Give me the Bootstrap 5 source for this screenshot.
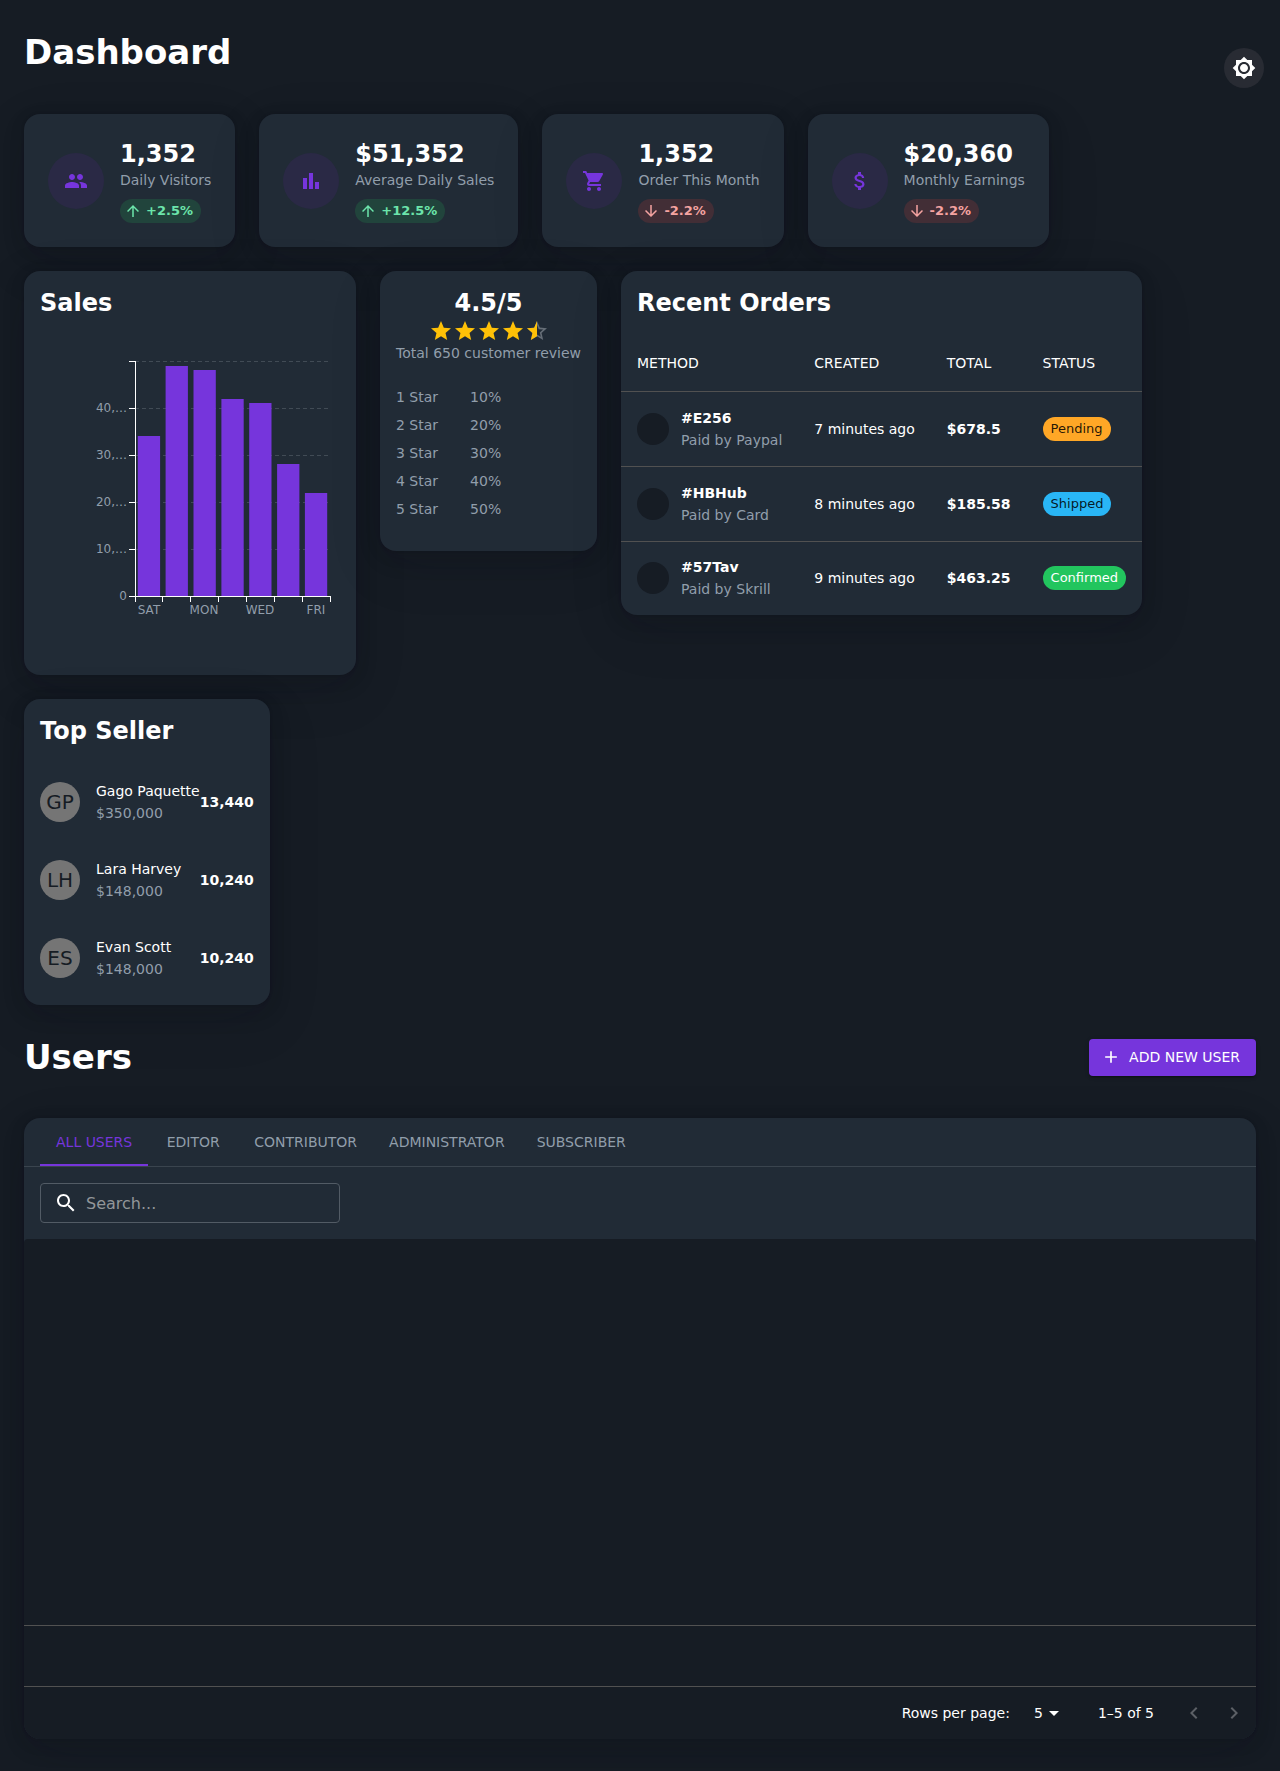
<!DOCTYPE html>
<html lang="en">
<head>
<meta charset="utf-8">
<meta name="viewport" content="width=device-width, initial-scale=1">
<title>Dashboard</title>
<link href="https://cdn.jsdelivr.net/npm/bootstrap@5.3.0/dist/css/bootstrap.min.css" rel="stylesheet">
<style>
  :root {
    --page: #161c24;
    --panel: #212b36;
    --brand: #7635dc;
    --muted: #919eab;
    --rule: #515151;
  }
  body {
    background: var(--page);
    color: #fff;
    font-family: "DejaVu Sans", sans-serif;
    font-size: 14px;
    line-height: 20px;
  }
  svg { display: block; flex-shrink: 0; }
  .ico { width: 24px; height: 24px; fill: currentColor; }
  .ico-sm { width: 18px; height: 18px; fill: currentColor; }
  .ico-md { width: 20px; height: 20px; fill: currentColor; }
  .page-title { font-size: 34px; line-height: 42px; font-weight: 700; margin: 0; }
  .panel-title { font-size: 24px; line-height: 32px; font-weight: 700; margin: 0; }
  .soft { color: var(--muted); }
  .top-bar { padding: 7px 0 26px; }
  .theme-btn {
    width: 40px; height: 40px; margin: 17px -8px 0 0;
    background: #282b33; color: #fff; border: 0; border-radius: 50%;
  }
  .panel {
    background: var(--panel);
    border-radius: 16px;
    box-shadow: 0 4px 16px rgba(17,17,26,.1), 0 8px 24px rgba(17,17,26,.1), 0 16px 56px rgba(17,17,26,.1), 0 0 3px rgba(17,17,26,.3);
  }
  .disc {
    width: 56px; height: 56px; border-radius: 50%;
    background: #2a2945; color: var(--brand);
  }
  .trend {
    height: 24px; border-radius: 12px; padding: 0 8px 0 4px; margin-top: 9px;
    font-size: 13px; font-weight: 700; gap: 4px;
  }
  .trend-up { background: #21443c; color: #6ce5ab; }
  .trend-down { background: #422e36; color: #f5a3a1; }
  .chart-text { font-size: 12px; fill: var(--muted); }
  .stars { color: #ffc107; }
  .score-list { padding: 20px 16px 28px; margin: 0; }
  .score-list li { gap: 32px; line-height: 28px; }

  .orders { border-collapse: collapse; margin-top: 16px; }
  .orders th, .orders td { padding: 16px; border-bottom: 1px solid var(--rule); }
  .orders th { font-weight: 400; line-height: 24px; text-transform: uppercase; }
  .orders tbody tr { height: 75px; }
  .orders tbody tr:last-child { height: 73px; }
  .orders td { padding-top: 15px; padding-bottom: 15px; }
  .orders tr:last-child td { border-bottom: 0; padding-top: 14px; padding-bottom: 14px; }
  .pay-dot { width: 32px; height: 32px; border-radius: 50%; background: var(--page); }
  .two-line { line-height: 22px; }
  .chip { display: inline-block; border-radius: 12px; padding: 0 8px; font-size: 13px; line-height: 24px; vertical-align: middle; }
  .chip-wait { background: #ffa726; color: rgba(0,0,0,.87); }
  .chip-sent { background: #29b6f6; color: rgba(0,0,0,.87); }
  .chip-done { background: #22c55e; color: #fff; }

  .seller-list { padding: 16px 16px 8px; }
  .seller-list li { height: 78px; }
  .initials {
    width: 40px; height: 40px; border-radius: 50%; margin-right: 16px;
    background: #757575; color: var(--page); font-size: 20px;
  }

  .users-bar { padding: 31px 0 40px; }
  .add-btn {
    --bs-btn-color: #fff; --bs-btn-hover-color: #fff;
    --bs-btn-bg: var(--brand); --bs-btn-hover-bg: #5f27b8; --bs-btn-border-width: 0;
    --bs-btn-padding-x: 16px; --bs-btn-padding-y: 6px;
    --bs-btn-font-size: 14px; --bs-btn-border-radius: 4px; --bs-btn-line-height: 25px;
    padding-left: 12px; gap: 8px; text-transform: uppercase;
    box-shadow: 0 3px 1px -2px rgba(0,0,0,.2), 0 2px 2px rgba(0,0,0,.14), 0 1px 5px rgba(0,0,0,.12);
  }
  .role-tabs { padding: 0 16px; border-bottom: 1px solid #3a444e; }
  .role-tabs button {
    min-width: 90px; height: 48px; padding: 0 16px; border: 0; background: none;
    color: var(--muted); text-transform: uppercase; border-bottom: 2px solid transparent; border-top: 2px solid transparent;
  }
  .role-tabs button.on { color: var(--brand); border-bottom-color: var(--brand); }
  .finder {
    width: 300px; height: 40px; padding: 0 13px; gap: 8px;
    border: 1px solid #525b65; border-radius: 4px;
  }
  .finder input { background: none; border: 0; outline: 0; color: #fff; font-size: 16px; padding: 1px 0 0; width: 100%; }
  .finder input::placeholder { color: #929699; opacity: 1; }
  .user-table { background: var(--page); border-radius: 4px 4px 16px 16px; }
  .user-rows { height: 386px; }
  .user-fill { height: 62px; border-top: 1px solid var(--rule); border-bottom: 1px solid var(--rule); }
  .pager { height: 52px; padding-right: 2px; }
  .pager select {
    appearance: none; background: none; border: 0; color: #fff; outline: 0;
    padding: 0 14px 0 8px; margin-left: 16px;
  }
  .pager select option { color: #000; }
  .caret-mark { margin-left: -24px; pointer-events: none; }
  .pager-range { margin-left: 32px; }
  .pager button { width: 40px; height: 40px; border: 0; background: none; color: #5c6066; }
</style>
<script src="https://cdn.jsdelivr.net/npm/bootstrap@5.3.0/dist/js/bootstrap.bundle.min.js"></script>
</head>
<body>
<main class="container-fluid px-4 pt-4 pb-0">
  <header class="top-bar d-flex justify-content-between align-items-start">
    <h1 class="page-title">Dashboard</h1>
    <button type="button" class="theme-btn d-flex align-items-center justify-content-center p-0" aria-label="Toggle light mode">
      <svg class="ico" viewBox="0 0 24 24"><path d="M20 8.69V4h-4.69L12 .69 8.69 4H4v4.69L.69 12 4 15.31V20h4.69L12 23.31 15.31 20H20v-4.69L23.31 12 20 8.69zM12 18c-3.31 0-6-2.69-6-6s2.69-6 6-6 6 2.69 6 6-2.69 6-6 6zm0-10c-2.21 0-4 1.79-4 4s1.79 4 4 4 4-1.79 4-4-1.79-4-4-4z"/></svg>
    </button>
  </header>

  <div class="d-flex flex-wrap gap-4 align-items-start">
    <section class="panel d-flex align-items-center gap-3 p-4">
      <div class="disc d-flex align-items-center justify-content-center"><svg class="ico" viewBox="0 0 24 24"><path d="M16 11c1.66 0 2.99-1.34 2.99-3S17.660 5 16 5c-1.66 0-3 1.34-3 3s1.34 3 3 3zm-8 0c1.66 0 2.990-1.34 2.990-3S9.660 5 8 5C6.340 5 5 6.340 5 8s1.340 3 3 3zm0 2c-2.330 0-7 1.170-7 3.500V19h14v-2.500c0-2.330-4.670-3.500-7-3.500zm8 0c-.29 0-.62.02-.97.05 1.160.84 1.970 1.970 1.970 3.450V19h6v-2.500c0-2.330-4.670-3.500-7-3.500z"/></svg></div>
      <div class="d-flex flex-column align-items-start">
        <div class="panel-title">1,352</div>
        <div class="soft">Daily Visitors</div>
        <div class="trend trend-up d-flex align-items-center"><svg class="ico-sm" viewBox="0 0 24 24"><path d="m4 12 1.410 1.410L11 7.830V20h2V7.830l5.580 5.590L20 12l-8-8-8 8z"/></svg>+2.5%</div>
      </div>
    </section>
    <section class="panel d-flex align-items-center gap-3 p-4">
      <div class="disc d-flex align-items-center justify-content-center"><svg class="ico" viewBox="0 0 24 24"><path d="M4 9h4v11H4zm12 4h4v7h-4zm-6-9h4v16h-4z"/></svg></div>
      <div class="d-flex flex-column align-items-start">
        <div class="panel-title">$51,352</div>
        <div class="soft">Average Daily Sales</div>
        <div class="trend trend-up d-flex align-items-center"><svg class="ico-sm" viewBox="0 0 24 24"><path d="m4 12 1.410 1.410L11 7.830V20h2V7.830l5.580 5.590L20 12l-8-8-8 8z"/></svg>+12.5%</div>
      </div>
    </section>
    <section class="panel d-flex align-items-center gap-3 p-4">
      <div class="disc d-flex align-items-center justify-content-center"><svg class="ico" viewBox="0 0 24 24"><path d="M7 18c-1.100 0-1.990.9-1.990 2S5.900 22 7 22s2-.9 2-2-.9-2-2-2zM1 2v2h2l3.600 7.590-1.350 2.450c-.16.28-.25.61-.25.96 0 1.100.9 2 2 2h12v-2H7.420c-.14 0-.25-.11-.25-.25l.03-.12.9-1.630h7.450c.75 0 1.410-.41 1.750-1.030l3.580-6.490c.08-.14.12-.31.12-.48 0-.55-.45-1-1-1H5.210l-.94-2H1zm16 16c-1.100 0-1.990.9-1.990 2s.89 2 1.990 2 2-.9 2-2-.9-2-2-2z"/></svg></div>
      <div class="d-flex flex-column align-items-start">
        <div class="panel-title">1,352</div>
        <div class="soft">Order This Month</div>
        <div class="trend trend-down d-flex align-items-center"><svg class="ico-sm" viewBox="0 0 24 24"><path d="m20 12-1.410-1.410L13 16.170V4h-2v12.170l-5.580-5.590L4 12l8 8 8-8z"/></svg>-2.2%</div>
      </div>
    </section>
    <section class="panel d-flex align-items-center gap-3 p-4">
      <div class="disc d-flex align-items-center justify-content-center"><svg class="ico" viewBox="0 0 24 24"><path d="M11.800 10.900c-2.270-.59-3-1.200-3-2.150 0-1.090 1.010-1.850 2.700-1.850 1.780 0 2.440.85 2.500 2.100h2.210c-.07-1.720-1.120-3.300-3.210-3.810V3h-3v2.160c-1.940.42-3.500 1.680-3.500 3.610 0 2.310 1.910 3.460 4.700 4.130 2.500.6 3 1.480 3 2.410 0 .69-.49 1.790-2.700 1.790-2.060 0-2.870-.92-2.980-2.100h-2.200c.12 2.190 1.760 3.420 3.680 3.830V21h3v-2.150c1.950-.37 3.500-1.500 3.500-3.550 0-2.840-2.430-3.810-4.700-4.400z"/></svg></div>
      <div class="d-flex flex-column align-items-start">
        <div class="panel-title">$20,360</div>
        <div class="soft">Monthly Earnings</div>
        <div class="trend trend-down d-flex align-items-center"><svg class="ico-sm" viewBox="0 0 24 24"><path d="m20 12-1.410-1.410L13 16.170V4h-2v12.170l-5.580-5.590L4 12l8 8 8-8z"/></svg>-2.2%</div>
      </div>
    </section>
  </div>

  <div class="d-flex flex-wrap gap-4 align-items-start mt-4">
    <section class="panel p-3">
      <h2 class="panel-title">Sales</h2>
      <svg width="300" height="340" viewBox="0 0 300 340" role="img" aria-label="Sales per day">
        <g stroke="#414b55" stroke-dasharray="4 3" shape-rendering="crispEdges">
          <path d="M95 42.500H291M95 89.500H291M95 136.500H291M95 183.500H291M95 230.500H291"/>
        </g>
        <g fill="#7635dc">
          <rect x="97.800" y="117" width="22.300" height="161"/>
          <rect x="125.600" y="47" width="22.300" height="231"/>
          <rect x="153.500" y="51" width="22.300" height="227"/>
          <rect x="181.400" y="80" width="22.300" height="198"/>
          <rect x="209.200" y="84" width="22.300" height="194"/>
          <rect x="237.100" y="145" width="22.300" height="133"/>
          <rect x="264.900" y="174" width="22.300" height="104"/>
        </g>
        <g fill="none" stroke="#fff">
          <path d="M95.500 42V277M95 277.500H291M89 42.500h6M89 89.500h6M89 136.500h6M89 183.500h6M89 230.500h6M89 277.500h6"/>
          <path d="M95.500 277v6M122.500 277v6M150.500 277v6M178.500 277v6M206.500 277v6M234.500 277v6M262.500 277v6M290.500 277v6"/>
        </g>
        <g class="chart-text" text-anchor="end">
          <text x="87" y="93">40,…</text><text x="87" y="140">30,…</text><text x="87" y="187">20,…</text><text x="87" y="234">10,…</text><text x="87" y="281">0</text>
        </g>
        <g class="chart-text" text-anchor="middle">
          <text x="109" y="295">SAT</text><text x="164" y="295">MON</text><text x="220" y="295">WED</text><text x="276" y="295">FRI</text>
        </g>
      </svg>
    </section>

    <section class="panel">
      <div class="d-flex flex-column align-items-center px-3 pt-3">
        <h2 class="panel-title">4.5/5</h2>
        <div class="stars d-flex" role="img" aria-label="4.5 stars out of 5">
          <svg class="ico" viewBox="0 0 24 24"><path d="M12 17.270 18.180 21l-1.640-7.030L22 9.240l-7.190-.61L12 2 9.190 8.630 2 9.240l5.460 4.730L5.820 21z"/></svg>
          <svg class="ico" viewBox="0 0 24 24"><path d="M12 17.270 18.180 21l-1.640-7.030L22 9.240l-7.190-.61L12 2 9.190 8.630 2 9.240l5.460 4.730L5.820 21z"/></svg>
          <svg class="ico" viewBox="0 0 24 24"><path d="M12 17.270 18.180 21l-1.640-7.030L22 9.240l-7.190-.61L12 2 9.190 8.630 2 9.240l5.460 4.730L5.820 21z"/></svg>
          <svg class="ico" viewBox="0 0 24 24"><path d="M12 17.270 18.180 21l-1.640-7.030L22 9.240l-7.190-.61L12 2 9.190 8.630 2 9.240l5.460 4.730L5.820 21z"/></svg>
          <svg class="ico" viewBox="0 0 24 24"><path fill="#666e77" d="m22 9.240-7.190-.62L12 2 9.190 8.630 2 9.240l5.460 4.730L5.820 21 12 17.270 18.180 21l-1.630-7.030L22 9.240zM12 15.400l-3.760 2.270 1-4.280-3.320-2.880 4.380-.38L12 6.100l1.710 4.040 4.380.38-3.320 2.880 1 4.280L12 15.400z"/><path d="M12 17.270V2L9.190 8.630 2 9.240l5.460 4.730L5.820 21z"/></svg>
        </div>
        <div class="soft">Total 650 customer review</div>
      </div>
      <ul class="score-list list-unstyled soft">
        <li class="d-flex"><span>1 Star</span><span>10%</span></li>
        <li class="d-flex"><span>2 Star</span><span>20%</span></li>
        <li class="d-flex"><span>3 Star</span><span>30%</span></li>
        <li class="d-flex"><span>4 Star</span><span>40%</span></li>
        <li class="d-flex"><span>5 Star</span><span>50%</span></li>
      </ul>
    </section>

    <section class="panel">
      <h2 class="panel-title px-3 pt-3">Recent Orders</h2>
      <table class="orders">
        <thead><tr><th scope="col">Method</th><th scope="col">Created</th><th scope="col">Total</th><th scope="col">Status</th></tr></thead>
        <tbody>
          <tr>
            <td><div class="d-flex align-items-center"><span class="pay-dot me-2"></span><div class="two-line ps-1"><div class="fw-bold">#E256</div><div class="soft">Paid by Paypal</div></div></div></td>
            <td>7 minutes ago</td><td class="fw-bold">$678.5</td><td><span class="chip chip-wait">Pending</span></td>
          </tr>
          <tr>
            <td><div class="d-flex align-items-center"><span class="pay-dot me-2"></span><div class="two-line ps-1"><div class="fw-bold">#HBHub</div><div class="soft">Paid by Card</div></div></div></td>
            <td>8 minutes ago</td><td class="fw-bold">$185.58</td><td><span class="chip chip-sent">Shipped</span></td>
          </tr>
          <tr>
            <td><div class="d-flex align-items-center"><span class="pay-dot me-2"></span><div class="two-line ps-1"><div class="fw-bold">#57Tav</div><div class="soft">Paid by Skrill</div></div></div></td>
            <td>9 minutes ago</td><td class="fw-bold">$463.25</td><td><span class="chip chip-done">Confirmed</span></td>
          </tr>
        </tbody>
      </table>
    </section>

    <section class="panel">
      <h2 class="panel-title px-3 pt-3">Top Seller</h2>
      <ul class="seller-list list-unstyled mb-0">
        <li class="d-flex align-items-center"><span class="initials d-flex align-items-center justify-content-center">GP</span><div class="two-line flex-grow-1"><div>Gago Paquette</div><div class="soft">$350,000</div></div><strong>13,440</strong></li>
        <li class="d-flex align-items-center"><span class="initials d-flex align-items-center justify-content-center">LH</span><div class="two-line flex-grow-1"><div>Lara Harvey</div><div class="soft">$148,000</div></div><strong>10,240</strong></li>
        <li class="d-flex align-items-center"><span class="initials d-flex align-items-center justify-content-center">ES</span><div class="two-line flex-grow-1"><div>Evan Scott</div><div class="soft">$148,000</div></div><strong>10,240</strong></li>
      </ul>
    </section>
  </div>

  <div class="users-bar d-flex justify-content-between align-items-center">
    <h2 class="page-title">Users</h2>
    <button type="button" class="btn add-btn d-flex align-items-center"><svg class="ico-md" viewBox="0 0 24 24"><path d="M19 13h-6v6h-2v-6H5v-2h6V5h2v6h6v2z"/></svg>Add new user</button>
  </div>

  <section class="panel">
    <div class="role-tabs d-flex" role="tablist">
      <button type="button" role="tab" aria-selected="true" class="on">All users</button>
      <button type="button" role="tab" aria-selected="false">Editor</button>
      <button type="button" role="tab" aria-selected="false">Contributor</button>
      <button type="button" role="tab" aria-selected="false">Administrator</button>
      <button type="button" role="tab" aria-selected="false">Subscriber</button>
    </div>
    <div class="p-3">
      <label class="finder d-flex align-items-center">
        <svg class="ico" viewBox="0 0 24 24"><path d="M15.500 14h-.79l-.28-.27C15.410 12.590 16 11.110 16 9.500 16 5.910 13.090 3 9.500 3S3 5.910 3 9.500 5.910 16 9.500 16c1.610 0 3.090-.59 4.230-1.570l.27.28v.79l5 4.990L20.490 19l-4.990-5zm-6 0C7.010 14 5 11.990 5 9.500S7.010 5 9.500 5 14 7.010 14 9.500 11.990 14 9.500 14z"/></svg>
        <input type="text" placeholder="Search..." aria-label="Search users">
      </label>
    </div>
    <div class="user-table">
      <div class="user-rows"></div>
      <div class="user-fill"></div>
      <div class="pager d-flex align-items-center justify-content-end">
        <label for="per-page">Rows per page:</label>
        <select id="per-page"><option>5</option><option>10</option><option>25</option></select>
        <svg class="ico caret-mark" viewBox="0 0 24 24"><path d="m7 10 5 5 5-5z"/></svg>
        <span class="pager-range me-3 pe-1">1–5 of 5</span>
        <button type="button" class="d-flex align-items-center justify-content-center p-0" aria-label="Previous page" disabled><svg class="ico" viewBox="0 0 24 24"><path d="M15.410 16.590 10.830 12l4.580-4.590L14 6l-6 6 6 6z"/></svg></button>
        <button type="button" class="d-flex align-items-center justify-content-center p-0" aria-label="Next page" disabled><svg class="ico" viewBox="0 0 24 24"><path d="M8.590 16.590 13.170 12 8.590 7.410 10 6l6 6-6 6z"/></svg></button>
      </div>
    </div>
  </section>
  <div class="pb-4 mb-2"></div>
</main>
</body>
</html>
